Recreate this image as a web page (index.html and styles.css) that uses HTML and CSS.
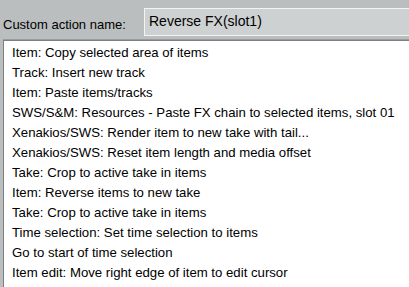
FILE: index.html
```html
<!DOCTYPE html>
<html lang="en">
<head>
  <meta charset="UTF-8">
  <title>Custom action</title>
  <link rel="stylesheet" href="styles.css">
</head>
<body>
  <div class="head">
    <label for="name">Custom action name:</label>
    <input type="text" id="name" value="Reverse FX(slot1)">
  </div>

  <ul class="actions">
    <li>Item: Copy selected area of items</li>
    <li>Track: Insert new track</li>
    <li>Item: Paste items/tracks</li>
    <li>SWS/S&amp;M: Resources - Paste FX chain to selected items, slot 01</li>
    <li>Xenakios/SWS: Render item to new take with tail...</li>
    <li>Xenakios/SWS: Reset item length and media offset</li>
    <li>Take: Crop to active take in items</li>
    <li>Item: Reverse items to new take</li>
    <li>Take: Crop to active take in items</li>
    <li>Time selection: Set time selection to items</li>
    <li>Go to start of time selection</li>
    <li>Item edit: Move right edge of item to edit cursor</li>
  </ul>
</body>
</html>
```

FILE: styles.css
```css
html, body { margin: 0; height: 100%; overflow: hidden; }
body { display: flex; flex-direction: column; background: #babebe; font-family: "Liberation Sans", Arial, sans-serif; font-size: 13.2px; color: #000; }
.head { display: flex; align-items: flex-start; padding: 8px 0 0 3px; height: 32px; flex: none; }
.head label { width: 141px; padding-top: 9px; line-height: 16px; font-size: 13px; }
.head input { flex: 1; margin-right: -6px; height: 24px; padding: 0 4px 2px; border: 1px solid #f2f4f4; background: #cdd1d1; font: inherit; font-size: 14px; color: #000; outline: none; }
.actions { flex: 1; list-style: none; margin: 0 0 0 3px; padding: 2px 0 0 8px; background: #fff; border-top: 1px solid #7c8080; border-left: 1px solid #7c8080; box-shadow: 0 -1px 0 #999d9d; }
.actions li { line-height: 20px; white-space: nowrap; }
```
